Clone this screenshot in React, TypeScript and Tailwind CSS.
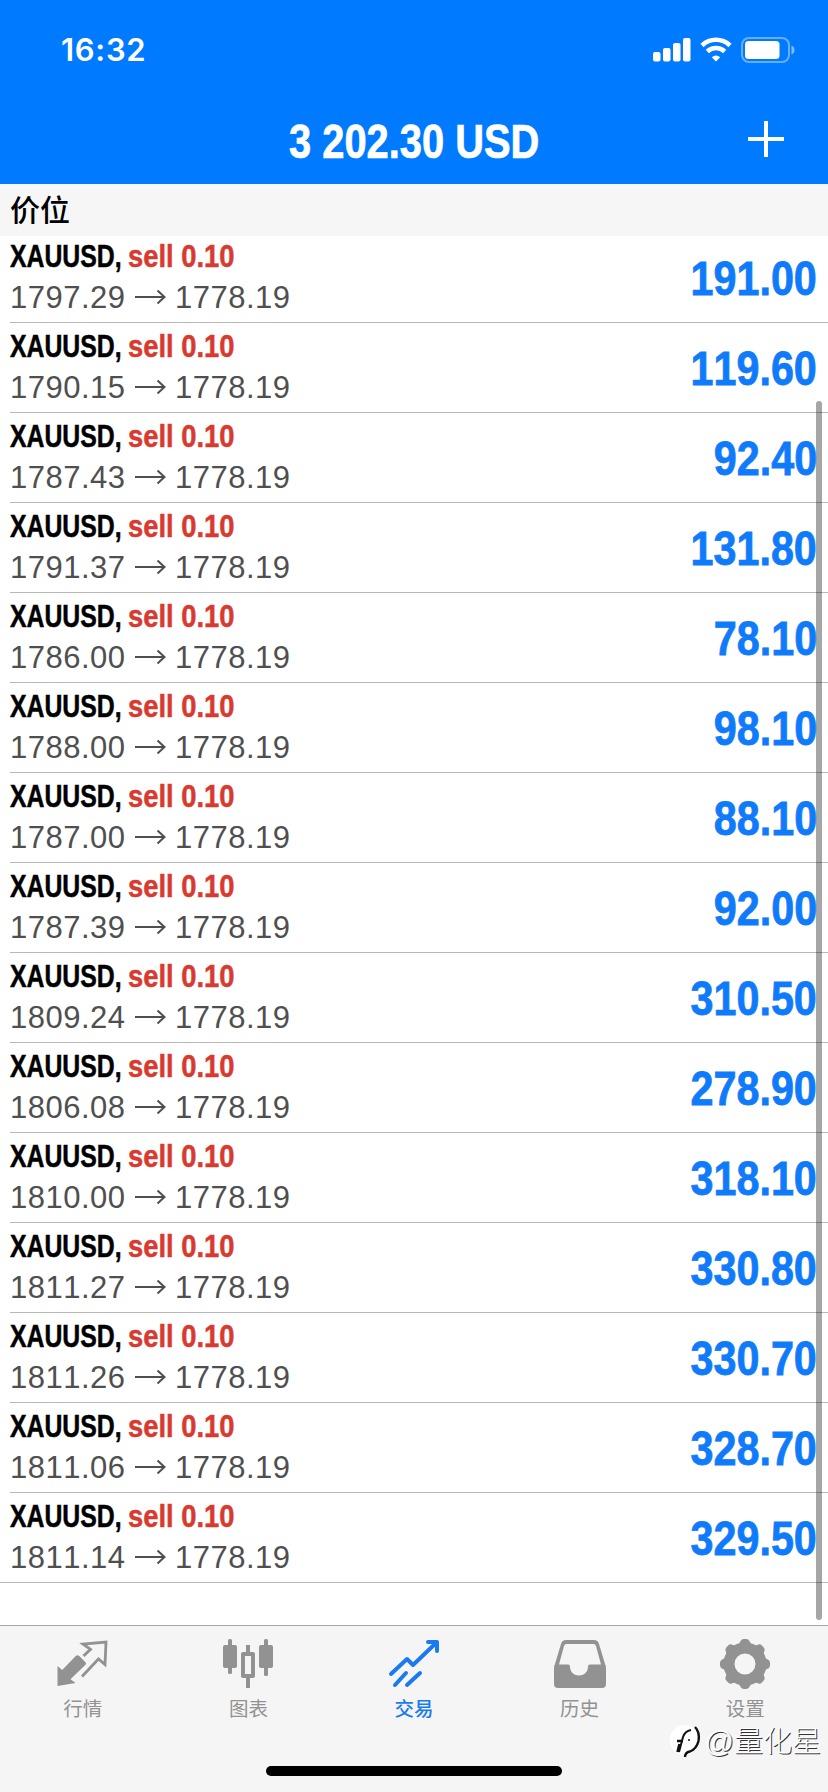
import type { ReactNode } from 'react'

type Position = {
  symbol: string
  volume: string
  open: string
  current: string
  profit: string
}

const row = (open: string, profit: string): Position => ({
  symbol: 'XAUUSD',
  volume: '0.10',
  open,
  current: '1778.19',
  profit,
})

const positions: Position[] = [
  row('1797.29', '191.00'),
  row('1790.15', '119.60'),
  row('1787.43', '92.40'),
  row('1791.37', '131.80'),
  row('1786.00', '78.10'),
  row('1788.00', '98.10'),
  row('1787.00', '88.10'),
  row('1787.39', '92.00'),
  row('1809.24', '310.50'),
  row('1806.08', '278.90'),
  row('1810.00', '318.10'),
  row('1811.27', '330.80'),
  row('1811.26', '330.70'),
  row('1811.06', '328.70'),
  row('1811.14', '329.50'),
]

const teeth = [0, 45, 90, 135, 180, 225, 270, 315]

function StatusBar() {
  return (
    <div className="flex h-[98px] items-center justify-between pl-[61px] pr-[32px]">
      <span className="mt-px font-['Inter'] text-[31px] font-semibold leading-none tracking-[0.7px]">16:32</span>
      <svg width="143" height="28" viewBox="0 0 143 28" fill="#fff">
        <rect x="0" y="17" width="7.500" height="9.500" rx="2" />
        <rect x="10" y="13" width="7.500" height="13.500" rx="2" />
        <rect x="20" y="8" width="7.500" height="18.500" rx="2" />
        <rect x="30" y="3" width="7.500" height="23.500" rx="2" />
        <g fill="none" stroke="#fff" strokeWidth="4.6">
          <path d="M49 10.500a20 20 0 0 1 28 0" />
          <path d="M54.300 16.500a12.500 12.500 0 0 1 17.400 0" />
        </g>
        <path d="M63 26.500l-4.200-4.300a6 6 0 0 1 8.400 0z" />
        <rect x="89" y="3" width="47" height="24" rx="7" fill="none" stroke="#fff" strokeOpacity=".4" strokeWidth="2" />
        <rect x="92" y="6" width="34.500" height="18" rx="3.500" />
        <path d="M138.500 10.500c4 1.500 4 7.500 0 9z" fillOpacity=".5" />
      </svg>
    </div>
  )
}

function Header() {
  return (
    <header className="h-[184px] bg-[#007aff] text-white">
      <StatusBar />
      <div className="grid h-[82px] grid-cols-[1fr_auto_1fr] items-center">
        <span />
        <h1 className="mt-[6px] w-[248px] whitespace-nowrap text-[48px] font-bold leading-none">
          <span className="inline-block origin-left -translate-x-px scale-x-[0.83] [-webkit-text-stroke:0.7px_currentColor]">
            3 202.30 USD
          </span>
        </h1>
        <svg className="mr-[44px] justify-self-end" width="36" height="36" viewBox="0 0 36 36" fill="#fff">
          <path d="M16 0h4v16h16v4H20v16h-4V20H0v-4h16z" />
        </svg>
      </div>
    </header>
  )
}

function PositionRow({ p, last }: { p: Position; last: boolean }) {
  return (
    <li className={last ? 'border-b border-[#b9b9bb]' : 'ml-[10px] border-b border-[#b9b9bb]'}>
      <div className={last ? 'ml-[10px] flex h-[89px] justify-between pr-[11px]' : 'flex h-[89px] justify-between pr-[11px]'}>
        <div className="pt-[6px]">
          <div className="flex h-[34px] items-center whitespace-nowrap text-[32px] font-bold leading-none">
            <span className="w-[118px]">
              <span className="inline-block origin-left scale-x-[0.775] text-black [-webkit-text-stroke:0.5px_currentColor]">
                {p.symbol},
              </span>
            </span>
            <span className="inline-block origin-left scale-x-[0.855] text-[#d93a30] [-webkit-text-stroke:0.5px_currentColor]">
              sell {p.volume}
            </span>
          </div>
          <div className="mt-[6px] flex h-[36px] items-center text-[31px] leading-none text-[#4f4f4f]">
            <span className="w-[125px] tracking-[0.5px]">{p.open}</span>
            <svg width="31" height="16" viewBox="0 0 31 16" fill="none" stroke="#4f4f4f" strokeWidth="2">
              <path d="M0 8h29M22.500 1.500l7 6.500-7 6.500" />
            </svg>
            <span className="ml-[9px] tracking-[0.5px]">{p.current}</span>
          </div>
        </div>
        <span className="mt-[3px] origin-right scale-x-[0.86] self-center whitespace-nowrap text-[48px] font-bold leading-none text-[#107bfa] [-webkit-text-stroke:0.8px_currentColor]">
          {p.profit}
        </span>
      </div>
    </li>
  )
}

function Tab({ label, active, children }: { label: string; active?: boolean; children: ReactNode }) {
  return (
    <div className={active ? 'flex flex-1 flex-col items-center text-[#1a7af0]' : 'flex flex-1 flex-col items-center text-[#929292]'}>
      <svg width="52" height="52" viewBox="0 0 52 52" fill="currentColor">
        {children}
      </svg>
      <span className={active ? 'mt-[8px] text-[19.5px] font-medium leading-[24px]' : 'mt-[8px] text-[19.5px] leading-[24px]'}>{label}</span>
    </div>
  )
}

function TabBar() {
  return (
    <nav className="flex h-[144px] border-t border-[#a8a8aa] bg-[#f5f5f5] pt-[11px]">
      <Tab label="行情">
        <path d="M.500 29l4.700 4L19 18.800q1.500-1.200 3 0l6.500 6.500q1 1.200 0 2.400L13.500 42.300l5 3.800L.500 49z" />
        <path d="M26.500 19l7-6.700L26 7l23-2-1 22.600-6.500-5.600L25 39.500" fill="none" stroke="currentColor" strokeWidth="2.800" />
      </Tab>
      <Tab label="图表">
        <rect x="1" y="8" width="14" height="23" rx="2" />
        <rect x="6" y="2" width="4" height="35" rx="1.500" />
        <rect x="37" y="8" width="14" height="23" rx="2" />
        <rect x="42" y="2" width="4" height="37" rx="1.500" />
        <path d="M24 8h4v7h3q2 0 2 2v22q0 2-2 2h-3v10h-4V41h-3q-2 0-2-2V17q0-2 2-2h3zM23 19v18h6V19z" fillRule="evenodd" />
      </Tab>
      <Tab label="交易" active>
        <g fill="none" stroke="currentColor" strokeWidth="4" strokeLinecap="round" strokeLinejoin="round">
          <path d="M3 37l16-15 6 6L48 6M40 5h9v9M7 48l11-12M19 48l13-12" />
        </g>
      </Tab>
      <Tab label="历史">
        <path
          d="M12 3h28q4 0 5 4l6 20q1 2 1 4v16q0 4-4 4H4q-4 0-4-4V31q0-2 1-4L7 7q1-4 5-4zM12.500 7q-2 0-2.500 2L5 27.500h9q2 0 2 2c0 12 18 12 18 0q0-2 2-2h11L42 9q-.500-2-2.500-2z"
          fill="currentColor"
          fillRule="evenodd"
        />
      </Tab>
      <Tab label="设置">
        <circle cx="26" cy="27" r="16" fill="none" stroke="currentColor" strokeWidth="11" />
        {teeth.map(angle => (
          <path key={angle} d="M17.500 9.500Q20 8 21 5q1.200-3 3.500-3h3q2.300 0 3.500 3 1 3 3.500 4.500z" transform={`rotate(${angle} 26 27)`} />
        ))}
      </Tab>
    </nav>
  )
}

function Watermark() {
  return (
    <div className="absolute bottom-[32px] right-[7px] flex items-center text-white">
      <svg className="mr-px" width="34" height="36" viewBox="0 0 34 36">
        <circle cx="14.500" cy="16" r="15" fill="#fff" />
        <path d="M9 28l4-15q2-6 8-7" fill="none" stroke="#111" strokeWidth="2" />
        <path d="M7 17h6M9.500 20l-2 8" fill="none" stroke="#111" strokeWidth="2.600" />
        <path d="M25 3q5 5 3.500 14-2 8-8.500 10.500-5 1-5 5.500" fill="none" stroke="#111" strokeWidth="2.400" />
        <circle cx="19" cy="16" r="1" fill="#111" />
      </svg>
      <span className="text-[29px] font-light leading-none [text-shadow:1px_1px_0_#333]">@量化星</span>
    </div>
  )
}

export default function App() {
  return (
    <div className="relative flex h-[1792px] w-[828px] flex-col overflow-hidden bg-white font-['Liberation_Sans','Noto_Sans_CJK_SC',sans-serif] [font-kerning:none]">
      <Header />
      <div className="relative z-10 flex h-[52px] items-center bg-[#f6f6f7] pl-[10px] pt-[2px] text-[30px] font-medium leading-none text-black">
        价位
      </div>
      <ul className="-mt-[3px] flex-1">
        {positions.map((p, i) => (
          <PositionRow key={i} p={p} last={i === positions.length - 1} />
        ))}
      </ul>

      <TabBar />
      <div className="h-[23px] bg-[#f5f5f5]" />

      {/* scroll thumb */}
      <div className="absolute right-[6px] top-[401px] h-[1219px] w-[6px] rounded-full bg-black/35" />
      {/* home indicator */}
      <div className="absolute bottom-[16px] left-[266px] h-[10px] w-[296px] rounded-full bg-black" />
      <Watermark />
    </div>
  )
}
